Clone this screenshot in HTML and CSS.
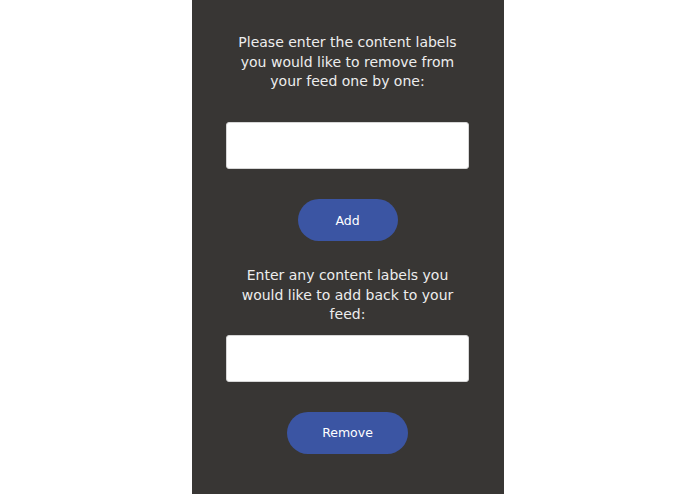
FILE: index.html
```html
<!DOCTYPE html>
<html>
<head>
<meta charset="utf-8">
<link rel="stylesheet" href="styles.css">
</head>
<body>
<main class="panel">
  <p class="prompt prompt-first">Please enter the content labels<br>you would like to remove from<br>your feed one by one:</p>
  <input class="field field-first" type="text">
  <button class="btn btn-add">Add</button>
  <p class="prompt prompt-second">Enter any content labels you<br>would like to add back to your<br>feed:</p>
  <input class="field field-second" type="text">
  <button class="btn btn-remove">Remove</button>
</main>
</body>
</html>
```
FILE: styles.css
```css
html, body {
  margin: 0;
  padding: 0;
  background: #ffffff;
  height: 100%;
}
body {
  font-family: "DejaVu Sans", Verdana, sans-serif;
}
.panel {
  width: 312px;
  height: 494px;
  margin: 0 auto;
  background: #383634;
  display: flex;
  flex-direction: column;
  align-items: center;
  padding-top: 33px;
  box-sizing: border-box;
}
.prompt {
  margin: 0;
  color: #ededed;
  font-size: 14px;
  line-height: 19.5px;
  text-align: center;
}
.field {
  box-sizing: border-box;
  width: 243px;
  height: 47px;
  border: 1px solid #d6d6d6;
  border-radius: 3px;
  background: #ffffff;
  padding: 0;
  outline: none;
}
.field-first { margin-top: 30.5px; }
.field-second { margin-top: 10px; }
.btn {
  height: 42px;
  margin-top: 30px;
  border: none;
  border-radius: 21px;
  background: #3b55a3;
  color: #ffffff;
  font-family: "DejaVu Sans", Verdana, sans-serif;
  font-size: 12.5px;
  padding: 0;
}
.btn-add { width: 100px; }
.btn-remove { width: 121px; }
.prompt-second { margin-top: 25px; }
```
